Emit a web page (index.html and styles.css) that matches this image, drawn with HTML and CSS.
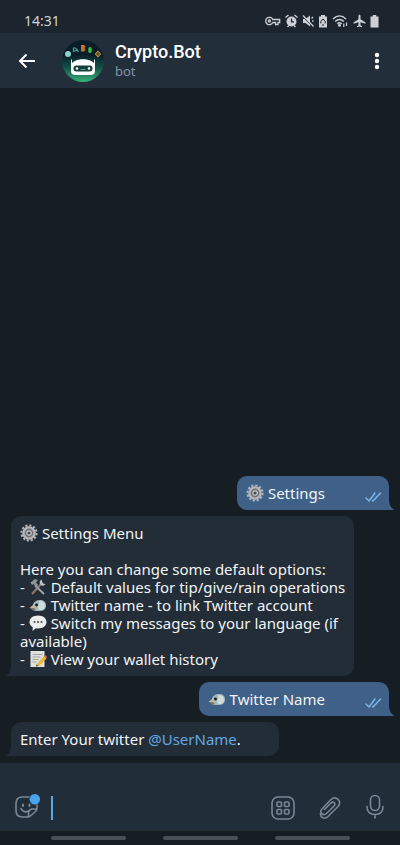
FILE: index.html
```html
<!DOCTYPE html>
<html lang="en">
<head>
    <meta charset="UTF-8">
    <meta name="viewport" content="width=device-width, initial-scale=1.0">
    <title>Crypto.Bot</title>
    <link rel="stylesheet" href="styles.css">
</head>
<body>
    <!-- Shared icons -->
    <svg class="sprite" aria-hidden="true">
        <symbol id="gear" viewBox="0 0 18 18">
            <circle cx="9" cy="9" r="7.6" fill="none" stroke="#b4b8bc" stroke-width="2" stroke-dasharray="2.2 1.78"/>
            <circle cx="9" cy="9" r="5.6" fill="#6d7074" stroke="#b4b8bc" stroke-width="2.4"/>
            <circle cx="9" cy="9" r="2.2" fill="#45494e" stroke="#c9ccd0" stroke-width="1.2"/>
        </symbol>
        <symbol id="bird" viewBox="0 0 18 18">
            <path d="M4 8.500C5 5 8.500 3.500 12 4c4 .5 5.500 3.500 5 6.500-.5 3-3 4.500-6 4.500H6C4.500 15 3.500 13.500 4 11z" fill="#9dbabd"/>
            <path d="M10 5c4-.5 6.500 2 6 5.500-.3 2.500-2.500 4-5 3.500-2.500-.6-2-3-1-5z" fill="#cfdcda"/>
            <path d="M.5 12 4.500 8.500l2 3-2 1.500z" fill="#c9b99a"/>
            <path d="M1 12.500l4-.5 2 2.500H4z" fill="#7b7263"/>
            <circle cx="7.500" cy="9" r="1.400" fill="#14191d"/>
        </symbol>
        <symbol id="checks" viewBox="0 0 17 10">
            <path d="M1 6l3 3 6-8M7.500 8.500 8 9l7.500-8" fill="none" stroke="#7fb8ee" stroke-width="1.400" stroke-linecap="round" stroke-linejoin="round"/>
        </symbol>
        <symbol id="tail" viewBox="0 0 5 12">
            <path d="M0 0c0 6 1 9 4.500 11 .7.500.4 1-.5 1H0z" fill="currentColor"/>
        </symbol>
    </svg>

    <div class="status-bar">
        <time class="clock">14:31</time>
        <div class="status-icons">
            <svg width="16" height="12" viewBox="0 0 16 12" fill="none" stroke="currentColor" stroke-width="1.300">
                <path d="M7.800 4.500h6.900v3h-1.700v2h-2.500v-2H7.800a3.700 3.700 0 1 1 0-3z"/>
                <circle cx="4.400" cy="6" r="1.100"/>
            </svg>
            <svg width="13" height="14" viewBox="0 0 13 14">
                <path d="M.5 3.500 3.500 1M12.500 3.500 9.500 1M2.500 13l1.500-1.500M10.500 13 9 11.500" stroke="currentColor" stroke-width="1.400"/>
                <circle cx="6.500" cy="7.500" r="5" fill="currentColor"/>
                <path d="M6.500 4.500v3.300H9" fill="none" stroke="#1c242e" stroke-width="1.200"/>
            </svg>
            <svg width="12" height="14" viewBox="0 0 12 14">
                <path d="M1 5h2.500L8 1.500v11L3.500 9H1z" fill="currentColor"/>
                <path d="M1 3 11 13" stroke="#1c242e" stroke-width="1"/>
                <path d="M1 1.500 11.500 12.500M9.500 4.500 11 3M10 7h1.500" stroke="currentColor" stroke-width="1.300"/>
            </svg>
            <svg width="10" height="14" viewBox="0 0 10 14">
                <path d="M3 1h4v1.500h2v11H1v-11h2z" fill="currentColor"/>
                <path d="M3 9.500 2.700 7.500 5 5l2.300 2.500-.3 2M4 11h2" fill="none" stroke="#1c242e" stroke-width="1"/>
            </svg>
            <svg width="17" height="14" viewBox="0 0 17 14" fill="none" stroke="currentColor" stroke-width="1.400">
                <path d="M1 5c4-4 9-4 13 0M3.200 7.500c2.700-2.700 6-2.700 8.600 0M5.300 9.700c1.400-1.300 3-1.300 4.400 0"/>
                <circle cx="7.500" cy="11.300" r=".8" fill="currentColor"/>
                <path d="M11.800 9.500v3.500M14.500 8.500V12" stroke-width="1.200"/>
            </svg>
            <svg width="13" height="14" viewBox="0 0 13 14">
                <path d="M6.500.8c.7 0 1 .6 1 1.300v3.200l5 3.200v1.200l-5-1.500v3l1.500 1.100v.9l-2.500-.6-2.500.6v-.9l1.500-1.100v-3l-5 1.500V8.500l5-3.200V2.100c0-.7.300-1.300 1-1.300z" fill="currentColor"/>
            </svg>
            <svg width="9" height="14" viewBox="0 0 9 14">
                <path d="M2.800 1h3.400v1.500h2.300v11H.5v-11h2.300z" fill="currentColor"/>
            </svg>
        </div>
    </div>

    <header class="header">
        <button class="icon-btn" type="button" aria-label="Back">
            <svg width="18" height="16" viewBox="0 0 18 16" fill="none" stroke="#fff" stroke-width="2">
                <path d="M17 8H2.500M8.500 1.500 2 8l6.500 6.500"/>
            </svg>
        </button>
        <svg class="avatar" viewBox="0 0 42 42" aria-hidden="true">
            <defs>
                <linearGradient id="avatarBg" x1="0" y1="0" x2="0" y2="1">
                    <stop offset=".35" stop-color="#0c1d2a"/>
                    <stop offset=".65" stop-color="#125044"/>
                    <stop offset="1" stop-color="#36b27c"/>
                </linearGradient>
            </defs>
            <circle cx="21" cy="21" r="21" fill="url(#avatarBg)"/>
            <circle cx="6" cy="14" r="3" fill="#8ad4cf"/>
            <path d="M11.500 7.500v4l4-1.500-3-2.500M15 10l1.500 2" fill="none" stroke="#4a9e8b" stroke-width="1.200"/>
            <path d="M19 5h3.500l1 2-1 1 1 2-1.500 1.500h-3z" fill="#c1702d"/>
            <ellipse cx="28" cy="10" rx="1.800" ry="3" fill="#31c33c"/>
            <path d="M36 10.500l3.200 3.500-3.200 3.500-3.200-3.500z" fill="#c99b3c"/>
            <path d="M34 14h4M36 12v4" stroke="#3b3420" stroke-width="1"/>
            <path d="M9.500 19.500v7M32.500 19.500v7" stroke="#fff" stroke-width="1"/>
            <path d="M9 26c0-9 24-9 24 0v5c0 3-2 4-5 4H14c-3 0-5-1-5-4z" fill="#fff"/>
            <rect x="11.500" y="25.500" width="19" height="6" rx="3" fill="#163e3b"/>
            <circle cx="15" cy="28.500" r="1.300" fill="#fff"/>
            <circle cx="27" cy="28.500" r="1.300" fill="#fff"/>
            <path d="M18.500 29.500h5" stroke="#5b9c86" stroke-width="1"/>
        </svg>
        <div class="peer">
            <h1 class="peer-name">Crypto.Bot</h1>
            <p class="peer-status">bot</p>
        </div>
        <button class="icon-btn" type="button" aria-label="More options">
            <svg width="6" height="18" viewBox="0 0 6 18" fill="#fff">
                <circle cx="3" cy="3" r="2.200"/>
                <circle cx="3" cy="9" r="2.200"/>
                <circle cx="3" cy="15" r="2.200"/>
            </svg>
        </button>
    </header>

    <main class="chat">
        <div class="message out">
            <p><svg class="emoji"><use href="#gear"/></svg> Settings</p>
            <svg class="checks"><use href="#checks"/></svg>
            <svg class="tail"><use href="#tail"/></svg>
        </div>

        <div class="message in">
            <p>
                <svg class="emoji"><use href="#gear"/></svg> Settings Menu<br>
                <br>
                Here you can change some default options:<br>
                - <svg class="emoji" viewBox="0 0 18 18">
                    <path d="M3 16 13 5" stroke="#8d7a66" stroke-width="2.200"/>
                    <path d="M1.500 4.500 6 1l3 1-2 2.500L9 7 7 9 4.500 6 3 7z" fill="#8e9498"/>
                    <path d="M6 7.500 15 16" stroke="#9ba1a5" stroke-width="2"/>
                    <path d="M12.500 1.500c-2 1-2.500 3-1 5s3.500 1.500 5-.5l-2.500-.5-.8-1.800z" fill="#bfc4c7"/>
                </svg> Default values for tip/give/rain operations<br>
                - <svg class="emoji"><use href="#bird"/></svg> Twitter name - to link Twitter account<br>
                - <svg class="emoji" viewBox="0 0 18 18">
                    <path d="M9 1.500c5 0 8.500 2.800 8.500 6.500s-3.500 6.500-8.500 6.500c-.8 0-1.500 0-2.200-.2L3.500 17l.3-3.800C1.800 12 .5 10.200.5 8 .5 4.300 4 1.500 9 1.500z" fill="#eceeee"/>
                    <circle cx="5.500" cy="8" r="1.100" fill="#4c5257"/>
                    <circle cx="9" cy="8" r="1.100" fill="#4c5257"/>
                    <circle cx="12.500" cy="8" r="1.100" fill="#4c5257"/>
                </svg> Switch my messages to your language (if<br>
                available)<br>
                - <svg class="emoji" viewBox="0 0 18 18">
                    <path d="M1.500 1h14v16h-14z" fill="#e1e1dc"/>
                    <path d="M3.500 4.500h10M3.500 7h8M3.500 9.500h6M3.500 12h4" stroke="#9da3a6" stroke-width="1"/>
                    <path d="M7.500 14.500 15 6l2.500 2.500-7 7-3.500 1z" fill="#eeb52e"/>
                    <path d="M15 6l1-1.200 2 2-.5 1.700z" fill="#d9675f"/>
                    <path d="M7 16.500l.5-2 1.800 1.600z" fill="#443b30"/>
                </svg> View your wallet history
            </p>
            <svg class="tail"><use href="#tail"/></svg>
        </div>

        <div class="message out">
            <p><svg class="emoji"><use href="#bird"/></svg> Twitter Name</p>
            <svg class="checks"><use href="#checks"/></svg>
            <svg class="tail"><use href="#tail"/></svg>
        </div>

        <div class="message in short">
            <p>Enter Your twitter <a href="#username">@UserName</a>.</p>
            <svg class="tail"><use href="#tail"/></svg>
        </div>
    </main>

    <form class="composer">
        <button class="icon-btn" type="button" aria-label="Stickers">
            <svg width="26" height="26" viewBox="0 0 26 26" fill="none" stroke="currentColor" stroke-width="1.600" stroke-linecap="round">
                <path d="M15 3H8.500C4 3 2 5 2 9.500v7C2 21 4 23 8.500 23h5c1.500 0 2.500-.5 3.500-1.500l4.500-4c1-1 1.500-2 1.500-3.500V11M14.500 23v-3.500c0-3 1.500-4.500 4.500-4.500h4M7 14.500c1.500 3 4.500 4 7.500 2.500"/>
                <path d="M9 10.500v1.500M15.500 10.500v1.500" stroke-width="2"/>
                <circle cx="20.800" cy="5.200" r="5.200" fill="#4ba3ec" stroke="none"/>
            </svg>
        </button>
        <input class="composer-input" type="text" aria-label="Message">
        <button class="icon-btn" type="button" aria-label="Bot commands">
            <svg width="24" height="24" viewBox="0 0 24 24" fill="none" stroke="currentColor" stroke-width="1.600">
                <rect x="1" y="1" width="22" height="22" rx="6"/>
                <rect x="6" y="6" width="4.500" height="4.500" rx="1"/>
                <rect x="13.500" y="6" width="4.500" height="4.500" rx="1"/>
                <rect x="6" y="13.500" width="4.500" height="4.500" rx="1"/>
                <rect x="13.500" y="13.500" width="4.500" height="4.500" rx="1"/>
            </svg>
        </button>
        <button class="icon-btn" type="button" aria-label="Attach file">
            <svg width="22" height="24" viewBox="0 0 22 24" fill="none" stroke="currentColor" stroke-width="1.600" stroke-linecap="round">
                <path d="M5.500 13.500 12 7c2.500-2.200 5.200.5 3 3l-7.500 7.500c-3.500 3-7.500-1-4.500-4.500L12 3.500c5-4.500 11.500 2 7 7L9 20.500c-3.500 3.500-8 1-7.500-3"/>
            </svg>
        </button>
        <button class="icon-btn" type="button" aria-label="Record voice message">
            <svg width="20" height="26" viewBox="0 0 20 26" fill="none" stroke="currentColor" stroke-width="1.600" stroke-linecap="round">
                <rect x="5.500" y="1.500" width="9" height="15" rx="4.500"/>
                <path d="M2 12.500c0 5 3 8 8 8s8-3 8-8M10 20.500V24"/>
            </svg>
        </button>
    </form>

    <div class="nav-bar">
        <span></span>
        <span></span>
        <span></span>
    </div>
</body>
</html>
```
FILE: styles.css
```css
* {
    box-sizing: border-box;
}

body {
    display: flex;
    flex-direction: column;
    min-height: 100vh;
    margin: 0;
    font-family: "Noto Sans", sans-serif;
    font-size: 15px;
    line-height: 18px;
    color: #f1f4f6;
    background-color: #161e24;
}

h1, p {
    margin: 0;
}

svg {
    display: block;
    flex-shrink: 0;
}

.sprite {
    position: absolute;
    width: 0;
    height: 0;
}

.icon-btn {
    padding: 0;
    border: none;
    color: inherit;
    background: none;
    cursor: pointer;
}

/* Status bar */
.status-bar {
    display: flex;
    align-items: center;
    justify-content: space-between;
    height: 33px;
    padding: 8px 21px 0 24px;
    color: #cdd1d6;
    background-color: #1c242e;
}

.clock {
    font-size: 14px;
}

.status-icons {
    display: flex;
    align-items: center;
    gap: 4px;
}

/* Header */
.header {
    display: flex;
    align-items: center;
    height: 55px;
    padding: 0 20px 0 18px;
    background-color: #222e3a;
}

.avatar {
    width: 42px;
    height: 42px;
    margin-left: 26px;
}

.peer {
    flex: 1;
    padding-left: 11px;
}

.peer-name {
    font-family: Roboto, sans-serif;
    font-size: 18px;
    font-weight: 500;
    line-height: 20px;
    color: #fff;
}

.peer-status {
    font-size: 13px;
    color: #8493a1;
}

/* Messages */
.chat {
    display: flex;
    flex: 1;
    flex-direction: column;
    justify-content: flex-end;
    gap: 6px;
    padding: 7px 11px;
}

.message {
    position: relative;
    max-width: 344px;
    padding: 8px 9px;
    border-radius: 10px;
}

.in {
    align-self: flex-start;
    color: #f1f4f6;
    background-color: #222d38;
    border-bottom-left-radius: 0;
}

.out {
    display: flex;
    align-self: flex-end;
    gap: 40px;
    padding-right: 7px;
    background-color: #3f6188;
    border-bottom-right-radius: 0;
}

.short {
    padding-right: 38px;
}

.message a {
    color: #62a8e2;
    text-decoration: none;
}

.emoji {
    display: inline-block;
    width: 18px;
    height: 18px;
    vertical-align: bottom;
}

.checks {
    align-self: flex-end;
    width: 17px;
    height: 10px;
}

.tail {
    position: absolute;
    bottom: 0;
    width: 5px;
    height: 12px;
}

.out .tail {
    left: 100%;
    color: #3f6188;
}

.in .tail {
    right: 100%;
    color: #222d38;
    transform: scaleX(-1);
}

/* Message field */
.composer {
    display: flex;
    align-items: flex-end;
    gap: 24px;
    height: 68px;
    padding: 0 15px 11px 14px;
    color: #788896;
    background-color: #222d3a;
}

.composer-input {
    flex: 1;
    min-width: 0;
    height: 24px;
    margin-left: -13px;
    padding: 0 8px;
    border: none;
    border-left: 2px solid #5aa7e6;
    outline: none;
    font: inherit;
    color: #fff;
    background: none;
}

.nav-bar {
    display: flex;
    justify-content: center;
    gap: 37px;
    height: 14px;
    padding-top: 5px;
    background-color: #151c22;
}

.nav-bar span {
    width: 75px;
    height: 4px;
    border-radius: 2px;
    background-color: #485056;
}
```
